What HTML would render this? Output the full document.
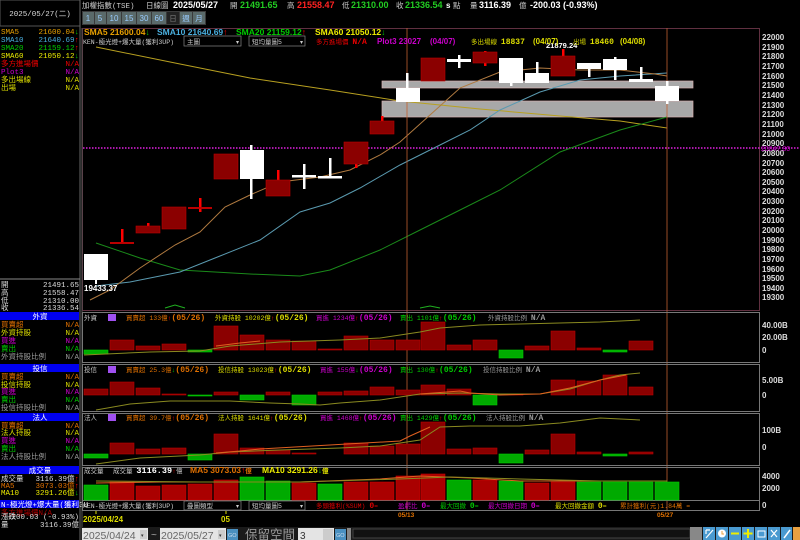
<!DOCTYPE html>
<html><head><meta charset="utf-8"><style>
html,body{margin:0;padding:0;background:#000;width:800px;height:540px;overflow:hidden}
svg{display:block}
text{font-family:"Liberation Sans","Noto Sans CJK TC",sans-serif;font-size:8px}
.s{font-family:"Liberation Mono","Noto Sans CJK TC",monospace;font-size:7.5px}
.b{font-weight:bold}
</style></head><body>
<svg width="800" height="540" viewBox="0 0 800 540" xmlns="http://www.w3.org/2000/svg">
<rect width="800" height="540" fill="#000"/>
<!-- left panel -->
<rect x="0" y="0" width="80" height="26" fill="#000" stroke="#555"/>
<text x="40" y="16" fill="#ddd" text-anchor="middle" class="s">2025/05/27(二)</text>
<line x1="80" y1="0" x2="80" y2="540" stroke="#666"/>
<g class="s">
<text x="1" y="34" fill="#e8a000" class="s">SMA5</text><text x="79" y="34" fill="#e8a000" text-anchor="end" class="s">21600.04<tspan fill="#0c0">↓</tspan></text>
<text x="1" y="42" fill="#4ab0e0" class="s">SMA10</text><text x="79" y="42" fill="#4ab0e0" text-anchor="end" class="s">21640.69<tspan fill="#f00">↑</tspan></text>
<text x="1" y="50" fill="#0c0" class="s">SMA20</text><text x="79" y="50" fill="#0c0" text-anchor="end" class="s">21159.12<tspan fill="#f00">↑</tspan></text>
<text x="1" y="58" fill="#ee0" class="s">SMA60</text><text x="79" y="58" fill="#ee0" text-anchor="end" class="s">21050.12<tspan fill="#0c0">↓</tspan></text>
<text x="1" y="66" fill="#e00" class="s">多方進場價</text><text x="79" y="66" fill="#e00" text-anchor="end" class="s">N/A</text>
<text x="1" y="74" fill="#c0c" class="s">Plot3</text><text x="79" y="74" fill="#c0c" text-anchor="end" class="s">N/A</text>
<text x="1" y="82" fill="#dd0" class="s">多出場線</text><text x="79" y="82" fill="#dd0" text-anchor="end" class="s">N/A</text>
<text x="1" y="90" fill="#dd0" class="s">出場</text><text x="79" y="90" fill="#dd0" text-anchor="end" class="s">N/A</text>
<line x1="0" y1="279" x2="80" y2="279" stroke="#888"/>
<text x="1" y="287" fill="#ddd" class="s">開</text><text x="79" y="287" fill="#ddd" text-anchor="end" class="s">21491.65</text>
<text x="1" y="295" fill="#ddd" class="s">高</text><text x="79" y="295" fill="#ddd" text-anchor="end" class="s">21558.47</text>
<text x="1" y="303" fill="#ddd" class="s">低</text><text x="79" y="303" fill="#ddd" text-anchor="end" class="s">21310.00</text>
<text x="1" y="310" fill="#ddd" class="s">收</text><text x="79" y="310" fill="#ddd" text-anchor="end" class="s">21336.54</text>
<rect x="0" y="312" width="79" height="8" fill="#0000f0"/><text x="40" y="319" fill="#fff" text-anchor="middle" class="s">外資</text>
<text x="1" y="327" fill="#e07000" class="s">買賣超</text><text x="79" y="327" fill="#e07000" text-anchor="end" class="s">N/A</text>
<text x="1" y="335" fill="#dd0" class="s">外資持股</text><text x="79" y="335" fill="#dd0" text-anchor="end" class="s">N/A</text>
<text x="1" y="343" fill="#c0c" class="s">買進</text><text x="79" y="343" fill="#c0c" text-anchor="end" class="s">N/A</text>
<text x="1" y="351" fill="#0c0" class="s">賣出</text><text x="79" y="351" fill="#0c0" text-anchor="end" class="s">N/A</text>
<text x="1" y="359" fill="#999" class="s">外資持股比例</text><text x="79" y="359" fill="#999" text-anchor="end" class="s">N/A</text>
<rect x="0" y="364" width="79" height="8" fill="#0000f0"/><text x="40" y="371" fill="#fff" text-anchor="middle" class="s">投信</text>
<text x="1" y="379" fill="#e07000" class="s">買賣超</text><text x="79" y="379" fill="#e07000" text-anchor="end" class="s">N/A</text>
<text x="1" y="387" fill="#dd0" class="s">投信持股</text><text x="79" y="387" fill="#dd0" text-anchor="end" class="s">N/A</text>
<text x="1" y="394" fill="#c0c" class="s">買進</text><text x="79" y="394" fill="#c0c" text-anchor="end" class="s">N/A</text>
<text x="1" y="402" fill="#0c0" class="s">賣出</text><text x="79" y="402" fill="#0c0" text-anchor="end" class="s">N/A</text>
<text x="1" y="410" fill="#999" class="s">投信持股比例</text><text x="79" y="410" fill="#999" text-anchor="end" class="s">N/A</text>
<rect x="0" y="413" width="79" height="8" fill="#0000f0"/><text x="40" y="420" fill="#fff" text-anchor="middle" class="s">法人</text>
<text x="1" y="428" fill="#e07000" class="s">買賣超</text><text x="79" y="428" fill="#e07000" text-anchor="end" class="s">N/A</text>
<text x="1" y="435" fill="#dd0" class="s">法人持股</text><text x="79" y="435" fill="#dd0" text-anchor="end" class="s">N/A</text>
<text x="1" y="443" fill="#c0c" class="s">買進</text><text x="79" y="443" fill="#c0c" text-anchor="end" class="s">N/A</text>
<text x="1" y="451" fill="#0c0" class="s">賣出</text><text x="79" y="451" fill="#0c0" text-anchor="end" class="s">N/A</text>
<text x="1" y="459" fill="#999" class="s">法人持股比例</text><text x="79" y="459" fill="#999" text-anchor="end" class="s">N/A</text>
<rect x="0" y="466" width="79" height="8" fill="#0000f0"/><text x="40" y="473" fill="#fff" text-anchor="middle" class="s">成交量</text>
<text x="1" y="481" fill="#ddd" class="s">成交量</text><text x="79" y="481" fill="#ddd" text-anchor="end" class="s">3116.39億<tspan fill="#f00">↑</tspan></text>
<text x="1" y="488" fill="#e07000" class="s">MA5</text><text x="79" y="488" fill="#e07000" text-anchor="end" class="s">3073.03億<tspan fill="#f00">↑</tspan></text>
<text x="1" y="495" fill="#ee0" class="s">MA10</text><text x="79" y="495" fill="#ee0" text-anchor="end" class="s">3291.26億<tspan fill="#0c0">↓</tspan></text>
<rect x="0" y="500" width="79" height="8" fill="#0000f0"/><text x="1" y="507" fill="#fff" class="s">N-極光燈+爆大量(獲利3U</text>
<text x="1" y="515" fill="#a00" class="s">多方進場價N/A</text>
<text x="1" y="519" fill="#ddd" class="s">漲跌</text><text x="79" y="519" fill="#ddd" text-anchor="end" class="s">-200.03 (-0.93%)</text>
<text x="1" y="527" fill="#ddd" class="s">量</text><text x="79" y="527" fill="#ddd" text-anchor="end" class="s">3116.39億</text>
</g>
<!-- header -->
<text x="82" y="8" fill="#ccc" class="s">加權指數(TSE)</text>
<text x="146" y="8" fill="#ccc" class="s">日線圖</text>
<text x="173" y="8" fill="#fff" class="b" style="font-size:9px">2025/05/27</text>
<text x="230" y="8" fill="#ccc" class="s">開</text><text x="240" y="8" fill="#2c2" class="b" style="font-size:9px">21491.65</text>
<text x="287" y="8" fill="#ccc" class="s">高</text><text x="297" y="8" fill="#f22" class="b" style="font-size:9px">21558.47</text>
<text x="342" y="8" fill="#ccc" class="s">低</text><text x="351" y="8" fill="#2c2" class="b" style="font-size:9px">21310.00</text>
<text x="396" y="8" fill="#ccc" class="s">收</text><text x="405" y="8" fill="#2c2" class="b" style="font-size:9px">21336.54</text>
<text x="446" y="8" fill="#fff" class="b" style="font-size:8px">s</text><text x="453" y="8" fill="#ccc" class="s">點</text>
<text x="470" y="8" fill="#ccc" class="s">量</text><text x="479" y="8" fill="#fff" class="b" style="font-size:9px">3116.39</text><text x="519" y="8" fill="#ccc" class="s">億</text>
<text x="530" y="8" fill="#fff" class="b" style="font-size:9px">-200.03 (-0.93%)</text>
<g>
<rect x="82" y="11" width="124" height="14" fill="#3a3a3a"/>
<rect x="83" y="12" width="11" height="12" fill="#5a6a6a"/><text x="88" y="21" fill="#9cf" text-anchor="middle">1</text>
<rect x="95" y="12" width="11" height="12" fill="#5a6a6a"/><text x="100" y="21" fill="#9cf" text-anchor="middle">5</text>
<rect x="107" y="12" width="14" height="12" fill="#5a6a6a"/><text x="114" y="21" fill="#9cf" text-anchor="middle">10</text>
<rect x="122" y="12" width="14" height="12" fill="#5a6a6a"/><text x="129" y="21" fill="#9cf" text-anchor="middle">15</text>
<rect x="137" y="12" width="14" height="12" fill="#5a6a6a"/><text x="144" y="21" fill="#9cf" text-anchor="middle">30</text>
<rect x="152" y="12" width="14" height="12" fill="#5a6a6a"/><text x="159" y="21" fill="#9cf" text-anchor="middle">60</text>
<rect x="167" y="12" width="12" height="12" fill="#222"/><text x="173" y="21" fill="#777" text-anchor="middle" class="s">日</text>
<rect x="180" y="12" width="12" height="12" fill="#5a6a6a"/><text x="186" y="21" fill="#9cf" text-anchor="middle" class="s">週</text>
<rect x="193" y="12" width="12" height="12" fill="#5a6a6a"/><text x="199" y="21" fill="#9cf" text-anchor="middle" class="s">月</text>
</g>
<!-- main chart frame -->
<rect x="82.5" y="28.5" width="677" height="282" fill="none" stroke="#603040"/>
<line x1="82" y1="28" x2="82" y2="540" stroke="#555"/>
<!-- axis labels -->
<g fill="#ddd" class="b" style="font-size:8px">
<text x="762" y="40">22000</text><text x="762" y="50">21900</text><text x="762" y="59">21800</text><text x="762" y="69">21700</text><text x="762" y="79">21600</text><text x="762" y="88">21500</text><text x="762" y="98">21400</text><text x="762" y="108">21300</text><text x="762" y="117">21200</text><text x="762" y="127">21100</text><text x="762" y="137">21000</text><text x="762" y="146">20900</text><text x="762" y="156">20800</text><text x="762" y="166">20700</text><text x="762" y="175">20600</text><text x="762" y="185">20500</text><text x="762" y="194">20400</text><text x="762" y="204">20300</text><text x="762" y="214">20200</text><text x="762" y="223">20100</text><text x="762" y="233">20000</text><text x="762" y="243">19900</text><text x="762" y="252">19800</text><text x="762" y="262">19700</text><text x="762" y="272">19600</text><text x="762" y="281">19500</text><text x="762" y="291">19400</text><text x="762" y="300">19300</text>
<text x="762" y="328">40.00B</text><text x="762" y="340">20.00B</text><text x="762" y="353">0</text>
<text x="762" y="383">5.00B</text><text x="762" y="398">0</text>
<text x="762" y="433">100B</text><text x="762" y="450">0</text>
<text x="762" y="479">4000</text><text x="762" y="491">2000</text><text x="762" y="508">0</text>
</g>
<text x="761" y="151" fill="#c0c" style="font-size:7px">20847.30</text>
<!-- magenta dotted -->
<line x1="83" y1="148" x2="800" y2="148" stroke="#e020e0" stroke-width="1.5" stroke-dasharray="1.5,1.5"/>
<!-- gray bands -->
<rect x="382" y="81" width="311" height="7" fill="#a8a8a8" stroke="#d8b0b0" stroke-width="0.7"/>
<rect x="382" y="101" width="311" height="16" fill="#a8a8a8" stroke="#d8b0b0" stroke-width="0.7"/>
<!-- MA lines -->
<polyline fill="none" stroke="#b8a020" stroke-width="1" points="96,47 180,64 250,78 330,90 400,101 480,109 560,116 620,121 667,128"/>
<polyline fill="none" stroke="#1a8a1a" stroke-width="1" points="96,243 140,258 180,270 250,274 300,276 330,270 380,250 420,230 460,210 500,190 560,152 620,130 667,117"/>
<polyline fill="none" stroke="#5a9ab0" stroke-width="1" points="96,286 130,282 180,272 220,256 260,240 300,212 330,203 360,188 400,165 440,145 470,130 500,110 540,92 580,80 620,76 667,73"/>
<polyline fill="none" stroke="#b07a40" stroke-width="1" points="90,300 110,290 140,268 175,245 200,232 225,207 250,195 280,182 320,177 350,170 380,155 400,142 430,115 460,88 500,72 540,68 580,70 620,70 655,74 667,76"/>
<!-- vertical markers -->
<line x1="407" y1="28" x2="407" y2="510" stroke="#c06030" stroke-width="0.8"/>
<line x1="667" y1="28" x2="667" y2="510" stroke="#c06030" stroke-width="0.8"/>
<!-- candles -->
<g>
<rect x="84" y="254" width="24" height="26" fill="#fff"/><rect x="95" y="280" width="2" height="4" fill="#fff"/>
<rect x="121" y="229" width="2.5" height="14" fill="#f00"/><rect x="110" y="242" width="24" height="2" fill="#b00"/>
<rect x="147" y="223" width="2.5" height="4" fill="#f00"/><rect x="136" y="226" width="24" height="7" fill="#8b0000" stroke="#b00" stroke-width=".6"/>
<rect x="162" y="207" width="24" height="22" fill="#8b0000" stroke="#b00" stroke-width=".6"/>
<rect x="199" y="198" width="2.5" height="14" fill="#f00"/><rect x="188" y="207" width="24" height="2" fill="#b00"/>
<rect x="214" y="154" width="24" height="25" fill="#8b0000" stroke="#b00" stroke-width=".6"/>
<rect x="250" y="145" width="2.5" height="54" fill="#fff"/><rect x="240" y="150" width="24" height="29" fill="#fff"/>
<rect x="277" y="170" width="2.5" height="10" fill="#f00"/><rect x="266" y="180" width="24" height="16" fill="#8b0000" stroke="#b00" stroke-width=".6"/>
<rect x="303" y="164" width="2.5" height="25" fill="#fff"/><rect x="292" y="175" width="24" height="2.5" fill="#fff"/>
<rect x="329" y="158" width="2.5" height="19" fill="#fff"/><rect x="318" y="176" width="24" height="2.5" fill="#fff"/>
<rect x="355" y="162" width="2.5" height="6" fill="#f00"/><rect x="344" y="142" width="24" height="22" fill="#8b0000" stroke="#b00" stroke-width=".6"/>
<rect x="381" y="116" width="2.5" height="6" fill="#f00"/><rect x="370" y="121" width="24" height="13" fill="#8b0000" stroke="#b00" stroke-width=".6"/>
<rect x="406" y="73" width="2.5" height="29" fill="#fff"/><rect x="396" y="88" width="24" height="14" fill="#fff"/>
<rect x="421" y="58" width="24" height="23" fill="#8b0000" stroke="#b00" stroke-width=".6"/>
<rect x="458" y="55" width="2.5" height="13" fill="#fff"/><rect x="447" y="59" width="24" height="3" fill="#fff"/>
<rect x="484" y="51" width="2.5" height="15" fill="#f00"/><rect x="473" y="52" width="24" height="11" fill="#8b0000" stroke="#b00" stroke-width=".6"/>
<rect x="510" y="80" width="2.5" height="6" fill="#fff"/><rect x="499" y="58" width="24" height="25" fill="#fff"/>
<rect x="536" y="62" width="2.5" height="21" fill="#fff"/><rect x="525" y="73" width="24" height="10" fill="#fff"/>
<rect x="562" y="49" width="2.5" height="8" fill="#f00"/><rect x="551" y="56" width="24" height="20" fill="#8b0000" stroke="#b00" stroke-width=".6"/>
<rect x="588" y="66" width="2.5" height="11" fill="#fff"/><rect x="577" y="63" width="24" height="6" fill="#fff"/>
<rect x="614" y="57" width="2.5" height="23" fill="#fff"/><rect x="603" y="59" width="24" height="11" fill="#fff"/>
<rect x="640" y="67" width="2.5" height="14" fill="#fff"/><rect x="629" y="79" width="24" height="3" fill="#fff"/>
<rect x="666" y="81" width="2.5" height="23" fill="#fff"/><rect x="655" y="86" width="24" height="15" fill="#fff"/>
</g>
<text x="84" y="291" fill="#fff" class="b" style="font-size:8px">19433.37</text>
<text x="546" y="48" fill="#fff" class="b" style="font-size:7.5px">21879.24</text>
<!-- main legend -->
<text x="84" y="35" fill="#e8a000" class="b" style="font-size:8.5px">SMA5 21600.04<tspan fill="#0c0">↓</tspan></text>
<text x="157" y="35" fill="#4ab0e0" class="b" style="font-size:8.5px">SMA10 21640.69<tspan fill="#f00">↑</tspan></text>
<text x="236" y="35" fill="#0c0" class="b" style="font-size:8.5px">SMA20 21159.12<tspan fill="#f00">↑</tspan></text>
<text x="315" y="35" fill="#ee0" class="b" style="font-size:8.5px">SMA60 21050.12<tspan fill="#0c0">↓</tspan></text>
<text x="83" y="44" fill="#ccc" class="s" style="font-size:6.5px">KEN-極光燈+爆大量(獲利3UP)</text>
<rect x="184" y="36" width="57" height="10" fill="#000" stroke="#888" stroke-width=".7"/><text x="187" y="44" fill="#ccc" class="s" style="font-size:6.5px">主圖</text><text x="236" y="44" fill="#ccc" style="font-size:6px">▾</text>
<rect x="249" y="36" width="56" height="10" fill="#000" stroke="#888" stroke-width=".7"/><text x="252" y="44" fill="#ccc" class="s" style="font-size:6.5px">短均量圖5</text><text x="300" y="44" fill="#ccc" style="font-size:6px">▾</text>
<text x="316" y="44" fill="#e00" class="s" style="font-size:6.5px">多方進場價 <tspan class="b" style="font-size:8px">N/A</tspan></text>
<text x="377" y="44" fill="#c0c" class="b" style="font-size:8px">Plot3 23027</text>
<text x="430" y="44" fill="#c0c" class="b" style="font-size:8px">(04/07)</text>
<text x="471" y="44" fill="#dd0" class="s" style="font-size:6.5px">多出場線 <tspan class="b" style="font-size:8px">18837</tspan></text>
<text x="533" y="44" fill="#dd0" class="b" style="font-size:8px">(04/07)</text>
<text x="573" y="44" fill="#dd0" class="s" style="font-size:6.5px">出場 <tspan class="b" style="font-size:8px">18460</tspan></text>
<text x="620" y="44" fill="#dd0" class="b" style="font-size:8px">(04/08)</text>
<!-- sub panels frames -->
<g fill="none" stroke="#777" stroke-width="1">
<rect x="82.5" y="312.5" width="677" height="50"/>
<rect x="82.5" y="364.5" width="677" height="47"/>
<rect x="82.5" y="413.5" width="677" height="52"/>
<rect x="82.5" y="467.5" width="677" height="33"/>
<rect x="82.5" y="500.5" width="677" height="10"/>
</g>
<!-- 外資 bars, zero 350 -->
<g stroke-width=".6">
<g fill="#8b0000" stroke="#b00">
<rect x="110" y="340" width="24" height="10"/><rect x="136" y="346" width="24" height="4"/><rect x="162" y="344" width="24" height="6"/><rect x="214" y="326" width="24" height="24"/><rect x="240" y="335" width="24" height="15"/><rect x="266" y="340" width="24" height="10"/><rect x="292" y="341" width="24" height="9"/><rect x="318" y="349" width="24" height="1"/><rect x="344" y="336" width="24" height="14"/><rect x="370" y="340" width="24" height="10"/><rect x="396" y="340" width="24" height="10"/><rect x="421" y="322" width="24" height="28"/><rect x="447" y="345" width="24" height="5"/><rect x="473" y="340" width="24" height="10"/><rect x="525" y="346" width="24" height="4"/><rect x="551" y="331" width="24" height="19"/><rect x="577" y="348" width="24" height="2"/><rect x="629" y="341" width="24" height="9"/>
</g>
<g fill="#0a0" stroke="#0c0">
<rect x="84" y="350" width="24" height="4"/><rect x="188" y="350" width="24" height="2"/><rect x="499" y="350" width="24" height="8"/><rect x="603" y="350" width="24" height="2"/>
</g>
</g>
<polyline fill="none" stroke="#8a8a20" points="84,355 150,352 200,351 230,346 280,342 340,340 380,338 420,332 440,328 480,325 520,324 560,323 600,322 640,320"/>
<polyline fill="none" stroke="#e06020" points="216,346 240,343 260,341"/>
<polyline fill="none" stroke="#20b020" points="165,308 175,305 185,308"/>
<polyline fill="none" stroke="#20b020" points="420,308 430,306 440,308"/>
<!-- 投信 bars, zero 395 -->
<g stroke-width=".6">
<g fill="#8b0000" stroke="#b00">
<rect x="84" y="389" width="24" height="6"/><rect x="110" y="382" width="24" height="13"/><rect x="136" y="388" width="24" height="7"/><rect x="162" y="394" width="24" height="1"/><rect x="214" y="392" width="24" height="3"/><rect x="266" y="392" width="24" height="3"/><rect x="318" y="392" width="24" height="3"/><rect x="344" y="391" width="24" height="4"/><rect x="370" y="387" width="24" height="8"/><rect x="396" y="390" width="24" height="5"/><rect x="421" y="385" width="24" height="10"/><rect x="447" y="389" width="24" height="6"/><rect x="499" y="394" width="24" height="1"/><rect x="551" y="380" width="24" height="15"/><rect x="577" y="381" width="24" height="14"/><rect x="603" y="375" width="24" height="20"/><rect x="629" y="387" width="24" height="8"/>
</g>
<g fill="#0a0" stroke="#0c0">
<rect x="188" y="395" width="24" height="1"/><rect x="240" y="395" width="24" height="5"/><rect x="292" y="395" width="24" height="10"/><rect x="473" y="395" width="24" height="10"/>
</g>
</g>
<polyline fill="none" stroke="#8a8a20" points="96,410 130,404 170,401 230,401 270,403 300,404 320,405 340,403 380,400 420,394 460,393 500,394 540,394 570,389 600,380 620,375 640,373"/>
<polyline fill="none" stroke="#e06020" points="420,394 460,391 470,393 500,395 540,394 570,388 600,380 626,375"/>
<!-- 法人 bars, zero 454 -->
<g stroke-width=".6">
<g fill="#8b0000" stroke="#b00">
<rect x="110" y="443" width="24" height="11"/><rect x="136" y="449" width="24" height="5"/><rect x="162" y="448" width="24" height="6"/><rect x="214" y="434" width="24" height="20"/><rect x="240" y="448" width="24" height="6"/><rect x="266" y="450" width="24" height="4"/><rect x="292" y="453" width="24" height="1"/><rect x="344" y="443" width="24" height="11"/><rect x="370" y="446" width="24" height="8"/><rect x="396" y="444" width="24" height="10"/><rect x="421" y="422" width="24" height="32"/><rect x="447" y="449" width="24" height="5"/><rect x="473" y="448" width="24" height="6"/><rect x="525" y="450" width="24" height="4"/><rect x="551" y="434" width="24" height="20"/><rect x="577" y="452" width="24" height="2"/><rect x="629" y="452" width="24" height="2"/>
</g>
<g fill="#0a0" stroke="#0c0">
<rect x="84" y="454" width="24" height="4"/><rect x="188" y="454" width="24" height="6"/><rect x="499" y="454" width="24" height="9"/><rect x="603" y="454" width="24" height="2"/>
</g>
</g>
<polyline fill="none" stroke="#8a8a20" points="96,464 140,458 200,455 230,452 280,450 340,448 380,446 420,440 440,427 470,426 520,426 560,423 600,418 640,420"/>
<polyline fill="none" stroke="#e06020" points="216,453 240,451 260,449 400,441 410,436 430,427"/>
<!-- volume bars, bottom 500 -->
<g stroke-width=".6">
<g fill="#a00" stroke="#c00">
<rect x="110" y="482" width="24" height="18"/><rect x="136" y="486" width="24" height="14"/><rect x="162" y="485" width="24" height="15"/><rect x="188" y="484" width="24" height="16"/><rect x="214" y="480" width="24" height="20"/><rect x="292" y="483" width="24" height="17"/><rect x="344" y="482" width="24" height="18"/><rect x="370" y="482" width="24" height="18"/><rect x="396" y="476" width="24" height="24"/><rect x="421" y="474" width="24" height="26"/><rect x="473" y="480" width="24" height="20"/><rect x="525" y="483" width="24" height="17"/><rect x="551" y="482" width="24" height="18"/>
</g>
<g fill="#0a0" stroke="#0c0">
<rect x="84" y="485" width="24" height="15"/><rect x="240" y="477" width="24" height="23"/><rect x="266" y="481" width="24" height="19"/><rect x="318" y="484" width="24" height="16"/><rect x="447" y="480" width="24" height="20"/><rect x="499" y="481" width="24" height="19"/><rect x="577" y="482" width="24" height="18"/><rect x="603" y="482" width="24" height="18"/><rect x="629" y="482" width="24" height="18"/><rect x="655" y="482" width="24" height="18"/>
</g>
</g>
<polyline fill="none" stroke="#e06020" points="96,483 160,482 220,482 300,482 380,479 420,476 470,478 520,481 560,481 620,481 667,481"/>
<polyline fill="none" stroke="#8a8a20" points="96,481 200,482 300,482 400,479 450,477 520,479 600,481 667,481"/>
<!-- sub panel labels -->
<g>
<text x="84" y="320" fill="#ccc" class="s" style="font-size:6.5px">外資</text>
<rect x="108" y="314" width="8" height="7" fill="#a050f0"/>
<text x="126" y="320" fill="#e07000" class="s" style="font-size:6.5px">買賣超 133億<tspan fill="#f00">↑</tspan><tspan class="b" style="font-size:8px">(05/26)</tspan></text>
<text x="215" y="320" fill="#dd0" class="s" style="font-size:6.5px">外資持股 10202億<tspan fill="#f00">↑</tspan><tspan class="b" style="font-size:8px">(05/26)</tspan></text>
<text x="316" y="320" fill="#c0c" class="s" style="font-size:6.5px">買進 1234億<tspan fill="#f00">↑</tspan><tspan class="b" style="font-size:8px">(05/26)</tspan></text>
<text x="400" y="320" fill="#0c0" class="s" style="font-size:6.5px">賣出 1101億<tspan fill="#f00">↑</tspan><tspan class="b" style="font-size:8px">(05/26)</tspan></text>
<text x="488" y="320" fill="#999" class="s" style="font-size:6.5px">外資持股比例 <tspan class="b" style="font-size:8px">N/A</tspan></text>

<text x="84" y="372" fill="#ccc" class="s" style="font-size:6.5px">投信</text>
<rect x="108" y="366" width="8" height="7" fill="#a050f0"/>
<text x="126" y="372" fill="#e07000" class="s" style="font-size:6.5px">買賣超 25.3億<tspan fill="#0c0">↓</tspan><tspan class="b" style="font-size:8px">(05/26)</tspan></text>
<text x="218" y="372" fill="#dd0" class="s" style="font-size:6.5px">投信持股 13023億<tspan fill="#f00">↑</tspan><tspan class="b" style="font-size:8px">(05/26)</tspan></text>
<text x="320" y="372" fill="#c0c" class="s" style="font-size:6.5px">買進 155億<tspan fill="#0c0">↓</tspan><tspan class="b" style="font-size:8px">(05/26)</tspan></text>
<text x="400" y="372" fill="#0c0" class="s" style="font-size:6.5px">賣出 130億<tspan fill="#f00">↑</tspan><tspan class="b" style="font-size:8px">(05/26)</tspan></text>
<text x="483" y="372" fill="#999" class="s" style="font-size:6.5px">投信持股比例 <tspan class="b" style="font-size:8px">N/A</tspan></text>

<text x="84" y="420" fill="#ccc" class="s" style="font-size:6.5px">法人</text>
<rect x="108" y="414" width="8" height="7" fill="#a050f0"/>
<text x="126" y="420" fill="#e07000" class="s" style="font-size:6.5px">買賣超 39.7億<tspan fill="#f00">↑</tspan><tspan class="b" style="font-size:8px">(05/26)</tspan></text>
<text x="218" y="420" fill="#dd0" class="s" style="font-size:6.5px">法人持股 1641億<tspan fill="#f00">↑</tspan><tspan class="b" style="font-size:8px">(05/26)</tspan></text>
<text x="320" y="420" fill="#c0c" class="s" style="font-size:6.5px">買進 1468億<tspan fill="#f00">↑</tspan><tspan class="b" style="font-size:8px">(05/26)</tspan></text>
<text x="400" y="420" fill="#0c0" class="s" style="font-size:6.5px">賣出 1429億<tspan fill="#f00">↑</tspan><tspan class="b" style="font-size:8px">(05/26)</tspan></text>
<text x="486" y="420" fill="#999" class="s" style="font-size:6.5px">法人持股比例 <tspan class="b" style="font-size:8px">N/A</tspan></text>

<text x="84" y="473" fill="#ccc" class="s" style="font-size:6.5px">成交量</text>
<text x="113" y="473" fill="#ccc" class="s" style="font-size:6.5px">成交量 <tspan fill="#fff" class="b" style="font-size:8.5px">3116.39</tspan><tspan fill="#f00">↑</tspan>億</text>
<text x="190" y="473" fill="#e07000" class="b" style="font-size:8.5px">MA5 3073.03<tspan fill="#f00">↑</tspan><tspan class="s" style="font-size:6.5px">億</tspan></text>
<text x="262" y="473" fill="#ee0" class="b" style="font-size:8.5px">MA10 3291.26<tspan fill="#0c0">↓</tspan><tspan class="s" style="font-size:6.5px">億</tspan></text>

<text x="83" y="508" fill="#ccc" class="s" style="font-size:6.5px">KEN-極光燈+爆大量(獲利3UP)</text>
<rect x="184" y="501" width="57" height="9" fill="#000" stroke="#888" stroke-width=".7"/><text x="187" y="508" fill="#ccc" class="s" style="font-size:6.5px">疊圖類型</text><text x="236" y="508" fill="#ccc" style="font-size:6px">▾</text>
<rect x="249" y="501" width="56" height="9" fill="#000" stroke="#888" stroke-width=".7"/><text x="252" y="508" fill="#ccc" class="s" style="font-size:6.5px">短均量圖5</text><text x="300" y="508" fill="#ccc" style="font-size:6px">▾</text>
<text x="316" y="508" fill="#d00" class="s" style="font-size:6.5px">多頭獲利(%SUM) <tspan class="b" style="font-size:8px">0</tspan>=</text>
<text x="398" y="508" fill="#c0c" class="s" style="font-size:6.5px">盈虧比 <tspan class="b" style="font-size:8px">0</tspan>=</text>
<text x="440" y="508" fill="#0c0" class="s" style="font-size:6.5px">最大回撤 <tspan class="b" style="font-size:8px">0</tspan>=</text>
<text x="488" y="508" fill="#c0c" class="s" style="font-size:6.5px">最大回撤日期 <tspan class="b" style="font-size:8px">0</tspan>=</text>
<text x="555" y="508" fill="#dd0" class="s" style="font-size:6.5px">最大回撤金額 <tspan class="b" style="font-size:8px">0</tspan>=</text>
<text x="620" y="508" fill="#e07000" class="s" style="font-size:6.5px">累計獲利(元)1.84萬 =</text>
</g>
<!-- date axis -->
<line x1="96" y1="511" x2="96" y2="514" stroke="#dd0"/>
<text x="83" y="522" fill="#dd0" class="b" style="font-size:8px">2025/04/24</text>
<line x1="226" y1="511" x2="226" y2="514" stroke="#dd0"/>
<text x="221" y="522" fill="#dd0" class="b" style="font-size:8px">05</text>
<text x="398" y="517" fill="#e07000" class="b" style="font-size:6.5px">05/13</text>
<text x="657" y="517" fill="#e07000" class="b" style="font-size:6.5px">05/27</text>
<!-- bottom controls -->
<rect x="82" y="527" width="718" height="13" fill="#1a1a1a"/>
<rect x="82" y="528" width="66" height="12" fill="#e4e4e4"/><text x="83" y="539" fill="#666" style="font-size:10.5px">2025/04/24</text>
<rect x="140" y="530" width="7" height="9" fill="#ccc"/><text x="141" y="537" fill="#333" style="font-size:5px">▾</text>
<text x="151" y="538" fill="#aaa" style="font-size:10px">~</text>
<rect x="160" y="528" width="66" height="12" fill="#e4e4e4"/><text x="161" y="539" fill="#666" style="font-size:10.5px">2025/05/27</text>
<rect x="218" y="530" width="7" height="9" fill="#ccc"/><text x="219" y="537" fill="#333" style="font-size:5px">▾</text>
<rect x="227" y="529" width="11" height="11" fill="#4a90c0"/><text x="228" y="537" fill="#cde" style="font-size:5.5px">GO</text>
<text x="245" y="539" fill="#999" style="font-size:12.5px;font-family:'Noto Sans CJK TC',sans-serif">保留空間</text>
<rect x="298" y="528" width="36" height="12" fill="#e4e4e4"/><text x="300" y="539" fill="#333" style="font-size:10px">3</text>
<rect x="323" y="529" width="10" height="11" fill="#ccc"/>
<rect x="335" y="529" width="11" height="11" fill="#4a90c0"/><text x="336" y="537" fill="#cde" style="font-size:5.5px">GO</text>
<rect x="347" y="528" width="4" height="12" fill="#888"/>
<rect x="353" y="529" width="337" height="9" fill="#111" stroke="#444"/>
<rect x="690" y="527" width="12" height="13" fill="#888"/>
<g fill="#4a9ad0"><rect x="703" y="527" width="12" height="13"/><rect x="716" y="527" width="12" height="13"/><rect x="729" y="527" width="12" height="13"/><rect x="742" y="527" width="12" height="13"/><rect x="755" y="527" width="12" height="13"/><rect x="768" y="527" width="12" height="13"/><rect x="781" y="527" width="11" height="13"/><rect x="793" y="527" width="7" height="13" fill="#e8a040"/></g>
<path d="M706 538 L713 530 M706 530 H710 M706 530 V534" stroke="#fff" stroke-width="1.2" fill="none"/>
<circle cx="722" cy="533.5" r="4" fill="#fff"/><path d="M722 531 V534 H724" stroke="#e8a040" stroke-width="1" fill="none"/>
<rect x="731" y="532.5" width="8" height="2" fill="#ee0"/>
<path d="M748 529 V538 M743.5 533.5 H752.5" stroke="#ee0" stroke-width="2"/>
<path d="M758 531 H765 V537 H758 Z" stroke="#fff" fill="none" stroke-width="1"/>
<path d="M771 530 L777 537 M777 530 L771 537" stroke="#fff" stroke-width="1.2"/>
<path d="M784 538 L790 530" stroke="#fff" stroke-width="1.5"/>
</svg>
</body></html>
